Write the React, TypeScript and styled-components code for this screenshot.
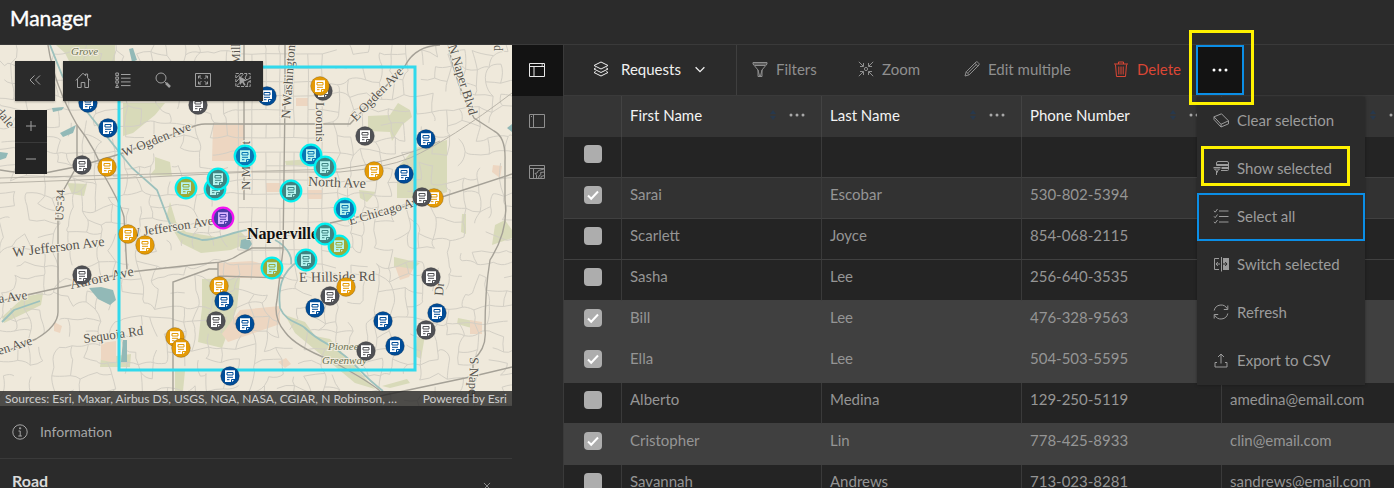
import React from "react";
import styled, { createGlobalStyle, css } from "styled-components";

const GlobalStyle = createGlobalStyle`
  *, *::before, *::after { box-sizing: border-box; }
  html, body, #root { height: 100%; }
  body {
    margin: 0;
    overflow: hidden;
    background: #2b2b2b;
    color: #9c9c9c;
    font: 15px/20px Lato, "Open Sans", sans-serif;
  }
  button {
    margin: 0;
    padding: 0;
    border: 0;
    background: none;
    color: inherit;
    font: inherit;
    cursor: pointer;
  }
`;

/* ---------- page frame ---------- */

const Page = styled.div`
  display: flex;
  flex-direction: column;
  height: 100%;
`;

const Header = styled.header`
  flex: none;
  padding: 4px 10px 13px;
  border-bottom: 1px solid #3a3a3a;
`;

const Title = styled.h1`
  margin: 0;
  color: #ffffff;
  font-size: 21px;
  line-height: 27px;
  font-weight: 400;
  -webkit-text-stroke: 0.4px #ffffff;
`;

const Body = styled.main`
  flex: 1;
  display: flex;
  min-height: 0;
`;

const SidePanel = styled.section`
  flex: none;
  width: 512px;
  display: flex;
  flex-direction: column;
`;

/* ---------- map ---------- */

const MapArea = styled.div`
  position: relative;
  flex: none;
  height: 361px;
  overflow: hidden;
  background: #efe9db;
`;

const MapDrawing = styled.svg`
  display: block;
  width: 100%;
  height: 100%;
`;

const MapControls = styled.div`
  position: absolute;
  top: 16px;
  left: 15px;
  display: flex;
  gap: 8px;
  align-items: flex-start;
`;

const MapBar = styled.div`
  display: flex;
  background: #2b2b2b;
  box-shadow: 0 1px 2px rgba(0, 0, 0, 0.3);
`;

const MapButton = styled.button`
  display: grid;
  place-items: center;
  width: 40px;
  height: 40px;
  padding-bottom: 2px;
  color: #a0a0a0;
`;

const ZoomControls = styled.div`
  position: absolute;
  top: 65px;
  left: 15px;
  display: flex;
  flex-direction: column;
  background: #242424;
`;

const ZoomButton = styled.button`
  display: grid;
  place-items: center;
  width: 32px;
  height: 32px;
  color: #a0a0a0;

  & + & {
    border-top: 1px solid #3a3a3a;
  }
`;

const Attribution = styled.div`
  position: absolute;
  left: 0;
  right: 0;
  bottom: 0;
  display: flex;
  justify-content: space-between;
  padding: 0 5px;
  background: rgba(36, 36, 36, 0.8);
  color: #cfcfcf;
  font-size: 12px;
  line-height: 15px;
`;

/* ---------- panel under the map ---------- */

const InfoRow = styled.div`
  display: flex;
  flex: none;
  align-items: center;
  gap: 12px;
  height: 53px;
  padding: 0 12px;
  border-bottom: 1px solid #3a3a3a;
  font-size: 14px;
  color: #a6a6a6;
`;

const SectionHead = styled.div`
  display: flex;
  flex: none;
  align-items: flex-start;
  justify-content: space-between;
  padding: 12px 18px 12px 12px;
`;

const SectionTitle = styled.h2`
  margin: 0;
  color: #dadada;
  font-size: 16px;
  line-height: 20px;
  font-weight: 700;
`;

const CloseButton = styled.button`
  padding-top: 8px;
  line-height: 0;
`;

/* ---------- rail ---------- */

const Rail = styled.nav`
  flex: none;
  width: 52px;
  border-right: 1px solid #3a3a3a;
`;

const RailButton = styled.button<{ $active?: boolean }>`
  display: grid;
  place-items: center;
  width: 100%;
  height: 51px;
  padding: 0 2px 2px 0;
  color: ${(p) => (p.$active ? "#e8e8e8" : "#8f8f8f")};
  background: ${(p) => (p.$active ? "#131313" : "transparent")};
`;

/* ---------- table panel ---------- */

const TablePanel = styled.section`
  flex: 1;
  min-width: 0;
`;

const Toolbar = styled.div`
  display: flex;
  height: 51px;
  border-bottom: 1px solid #3a3a3a;
`;

const LayerPicker = styled.button`
  display: flex;
  align-items: center;
  gap: 12px;
  flex: none;
  width: 173px;
  padding: 0 30px 2px 29px;
  border-right: 1px solid #3f3f3f;
  color: #f0f0f0;
  text-align: left;
`;

const LayerName = styled.span`
  flex: 1;
`;

const ToolButton = styled.button<{ $width: number; $danger?: boolean }>`
  display: flex;
  align-items: center;
  gap: 8px;
  flex: none;
  width: ${(p) => p.$width}px;
  padding: 0 0 2px 15px;
  white-space: nowrap;
  color: ${(p) => (p.$danger ? "#dc4635" : "#8f8f8f")};
`;

const MoreWrap = styled.div`
  position: relative;
  z-index: 2;
  flex: none;
  width: 48px;
`;

const MoreButton = styled.button`
  display: grid;
  place-items: center;
  width: 100%;
  height: 100%;
  border: 2px solid #0b8ee6;
  background: #131313;
  color: #ffffff;
`;

const highlight = css`
  position: absolute;
  border: 3px solid #fff200;
  pointer-events: none;
`;

const MoreHighlight = styled.span`
  ${highlight}
  inset: -15px -10px -10px -7px;
`;

const ItemHighlight = styled.span`
  ${highlight}
  inset: 1px 15px 7px 4px;
`;

const Menu = styled.ul`
  position: absolute;
  top: 52px;
  left: 1px;
  z-index: -1;
  width: 168px;
  margin: 0;
  padding: 0;
  list-style: none;
  background: #2b2b2b;
  box-shadow: 0 0 3px rgba(0, 0, 0, 0.35);
`;

const MenuItem = styled.li`
  position: relative;
`;

const MenuButton = styled.button<{ $focused?: boolean }>`
  display: flex;
  align-items: center;
  gap: 8px;
  width: 100%;
  height: 48px;
  padding: 0 14px 2px;
  border: 2px solid ${(p) => (p.$focused ? "#0b8ee6" : "transparent")};
  text-align: left;
  white-space: nowrap;
`;

const TableFrame = styled.div`
  overflow: hidden;
`;

const DataTable = styled.table`
  width: 858px;
  table-layout: fixed;
  border-collapse: separate;
  border-spacing: 0;
`;

const CheckColumn = styled.col`
  width: 58px;
`;

const HeadCell = styled.th`
  height: 41px;
  padding: 0 0 3px 8px;
  border-right: 1px solid #434343;
  background: #353535;
  color: #f3f3f3;
  font-weight: 400;
  text-align: left;
`;

const HeadContent = styled.div`
  display: flex;
  align-items: center;
  gap: 12px;
  padding-right: 16px;
`;

const HeadLabel = styled.span`
  flex: 1;
`;

const HeadMenu = styled.button`
  line-height: 0;
  color: #a8a8a8;
`;

type Tone = "plain" | "dim" | "selected";

const toneColor: Record<Tone, string> = {
  plain: "#242424",
  dim: "#323232",
  selected: "#404040",
};

const Row = styled.tr<{ $tone: Tone }>`
  background: ${(p) => toneColor[p.$tone]};

  td {
    border-right: 1px solid ${(p) => (p.$tone === "selected" ? "#404040" : "#3a3a3a")};
    border-bottom: 1px solid #404040;
  }
`;

const Cell = styled.td`
  height: 41px;
  padding: 0 0 8px 8px;
  color: #959595;
  white-space: nowrap;
`;

const CheckCell = styled.td`
  padding: 0 0 7px;
  text-align: center;
  line-height: 0;
`;

const Checkbox = styled.input`
  appearance: none;
  width: 18px;
  height: 18px;
  margin: 0;
  border-radius: 4px;
  background: #adadad;
  vertical-align: middle;

  &:checked {
    background: #adadad
      url("data:image/svg+xml,%3Csvg xmlns='http://www.w3.org/2000/svg' viewBox='0 0 18 18' fill='none' stroke='white' stroke-width='2'%3E%3Cpath d='M4 9.5l3.2 3.2L14 5.5'/%3E%3C/svg%3E");
  }
`;

/* ---------- icons ---------- */

const icons = {
  collapse: <path d="M7.5 3.5L3 8l4.500 4.500M13 3.500L8.500 8l4.500 4.500" />,
  home: <path d="M.8 8.500L8 1.200l2.600 2.600V2h2v3.900l2.600 2.600M2.500 7v8.500h3.700V10.500h3.600v5h3.700V7" />,
  legend: (
    <>
      <path d="M6 2.500h9.500M6 6.200h9.500M6 9.900h9.500M6 13.600h9.500" />
      <path d="M.8 1h2.600v2.600H.8zM.8 5h2.600v2.400H.8zM.8 8.800h2.600v2.400H.8zM2.100 12.500l1.500 3H.6z" />
    </>
  ),
  search: (
    <>
      <circle cx="6" cy="6" r="5" />
      <path d="M9.500 9.500l1.500 1.500" />
      <path d="M11 11l4 4" strokeWidth="2.500" />
    </>
  ),
  extent: (
    <>
      <path d="M.5 1.500h15v13H.5z" />
      <path d="M3.500 6.500v-2.500h2.500M3.500 4l3 3M12.500 6.500v-2.500H10M12.500 4l-3 3M3.500 9.500V12h2.500M3.500 12l3-3M12.500 9.500V12H10M12.500 12l-3-3" />
    </>
  ),
  select: (
    <>
      <path d="M.8 1.500h14.400v13H.8z" strokeDasharray="3 1.200" />
      <path d="M1 6l5-4.500M1 10l7.500-8M1.500 14l4-4M12 2l-2 4 2 2 3-2M12 14l1-4 2.500-1" />
      <path d="M4 4l8 4.500-3.300 1 2 3.500-1.500.8-2-3.400L5 13z" fill="currentColor" stroke="none" />
    </>
  ),
  info: (
    <>
      <circle cx="8" cy="8" r="7.200" />
      <path d="M6.500 7h1.700v5M6.300 12h3.600M7.500 3.800h1.200v1H7.500z" />
    </>
  ),
  close: <path d="M4.500 4.500l7 7M11.500 4.500l-7 7" />,
  railBoth: <path d="M.5 1.500h15v13H.5zM.5 4.500h15M5 4.500v10M3 3h.01M12.500 3H14" />,
  railSide: <path d="M.5 1.500h15v13H.5zM4.500 1.500v13M2.500 3v1" />,
  railMap: <path d="M.5 1.500h15v13H.5zM.5 4.500h15M4.500 4.500v10M7.500 14.500V11L6 9.500l2-.5 1.500-2.500L15 5M9.500 14.500l.5-2.500 2-1.500-.5-2L15.500 8M12 14.500v-2l3.500-1" />,
  layers: <path d="M8 1l7 3.500-7 3.500-7-3.500zM2.700 7L1 8l7 3.500L15 8l-1.700-1M2.700 10.500L1 11.500 8 15l7-3.500-1.700-1" />,
  chevron: <path d="M3 6L8 11 13 6" strokeWidth="1.500" />,
  filter: <path d="M1 1.500h14v1.500L10 9v6.500H6V9L1 3zM1 3h14M6 9l1.500 6M10 9l-1.500 6M3 4.500h10" />,
  zoomTo: (
    <>
      <circle cx="8" cy="8" r="1.600" />
      <path d="M.8.8l4.500 4.500M2 5.500h3.500V2M15.200.8l-4.500 4.500M14 5.500h-3.500V2M.8 15.200l4.500-4.500M2 10.500h3.500V14M15.200 15.200l-4.500-4.500M14 10.500h-3.500V14" />
    </>
  ),
  pencil: <path d="M1 15l1.200-4.200L12 1c1-1 4 1.700 3 3L5.200 13.800zM2.200 10.800l3 3M10.800 2.200l3 3M4 11.800l8.500-8.500" />,
  trash: <path d="M1 3h14M5.500 3V1h5v2M2.500 3.500l1 12h9l1-12M5.800 5.500v8M8 5.500v8M10.200 5.500v8" />,
  dots: (
    <g fill="currentColor" stroke="none">
      <circle cx="2" cy="8" r="1.500" />
      <circle cx="8" cy="8" r="1.500" />
      <circle cx="14" cy="8" r="1.500" />
    </g>
  ),
  eraser: <path d="M1 4.800L8.500 1.800l7 7L8 12.300zM1 4.800v2.700l7 7.500v-2.700M8 15l7.500-3.200V8.800" />,
  showSelected: (
    <>
      <path d="M3.500 5.500V3q0-1.500 1.500-1.500h9q1.500 0 1.500 1.500v6.500q0 1-1 1H8" />
      <path d="M3.500 5h12M8.500 8h7" strokeWidth="1.800" />
      <path d="M.5 7.500h7M1 8.500l2.500 2.500v4M7 8.500L4.500 11v1.500M1.500 9h5" />
    </>
  ),
  selectAll: <path d="M6 3h9.500M6 8.500h9.500M6 14h9.500M1 2.800l1.200 1.400L4.500 1M1 8.300l1.200 1.400L4.500 6.500M1 13.800l1.200 1.400L4.500 12" />,
  switch: (
    <>
      <path d="M6 2.500H1.500v11H6M8.500 1v14.500M3 8h4M4.800 6L3 8l1.800 2" />
      <path d="M10 2h6v12h-6z" fill="currentColor" stroke="none" />
      <path d="M10 8h4M12.200 6l1.800 2-1.800 2" stroke="#2b2b2b" />
    </>
  ),
  refresh: <path d="M1.200 6.500a7 7 0 0 1 13-1.800M14.800 1.500v4h-4M14.800 9.500a7 7 0 0 1-13 1.800M1.200 14.500v-4h4" />,
  export: <path d="M8 11.500V2M5 5l3-3 3 3M4 10.500H2v4.500h12v-4.500h-2" />,
  plus: <path d="M8 3v10M3 8h10" />,
  minus: <path d="M3 8h10" />,
};

type IconName = keyof typeof icons;

const IconSvg = styled.svg`
  display: block;
  flex: none;
  fill: none;
  stroke: currentColor;
  stroke-width: 1;
`;

function Icon({ name, size = 16 }: { name: IconName; size?: number }) {
  return (
    <IconSvg width={size} height={size} viewBox="0 0 16 16" aria-hidden="true">
      {icons[name]}
    </IconSvg>
  );
}

const SortIcon = () => (
  <svg width="8" height="12" viewBox="0 0 8 12" aria-hidden="true">
    <path d="M1 5l3-4 3 4zM1 7l3 4 3-4z" fill="#27384c" />
  </svg>
);

/* ---------- map drawing ---------- */

/* Repeatable pseudo-random numbers, so the street pattern never changes. */
function makeRandom(seed: number) {
  let s = seed;
  return () => {
    s = (s * 16807) % 2147483647;
    return s / 2147483647;
  };
}

/* Winding residential streets: a lattice with shifted corners and missing edges. */
function windingStreets() {
  const rnd = makeRandom(71);
  const step = 14;
  const cols = 39;
  const rows = 28;
  const pts = Array.from({ length: rows }, (_, r) =>
    Array.from({ length: cols }, (_, c) => {
      const x = c * step;
      const y = 40 + r * step;
      const town = x > 225 && x < 335 && y > 45 && y < 270;
      const j = town ? 1 : 9;
      return { x: x + (rnd() - 0.5) * j, y: y + (rnd() - 0.5) * j, town };
    })
  );
  let d = "";
  const edge = (a: { x: number; y: number; town: boolean }, b: { x: number; y: number }) => {
    const bend = a.town ? 0 : 7;
    const keep = a.town ? 0.93 : 0.6;
    const cx = (a.x + b.x) / 2 + (rnd() - 0.5) * bend;
    const cy = (a.y + b.y) / 2 + (rnd() - 0.5) * bend;
    if (rnd() < keep) {
      d += `M${a.x.toFixed(1)} ${a.y.toFixed(1)}Q${cx.toFixed(1)} ${cy.toFixed(1)} ${b.x.toFixed(1)} ${b.y.toFixed(1)}`;
    }
  };
  for (let r = 0; r < rows; r++) {
    for (let c = 0; c < cols; c++) {
      if (c + 1 < cols) edge(pts[r][c], pts[r][c + 1]);
      if (r + 1 < rows) edge(pts[r][c], pts[r + 1][c]);
    }
  }
  return d;
}

const streets = windingStreets();

const parks = [
  "M56 45h59v28l-20 30-10-10-20-40z",
  "M123 103h42l-10 12-22 18-10 3z",
  "M155 157l15 5 2 14-22-1 5-6z",
  "M67 183l20 1-3 12-12-2z",
  "M368 116l22-1 8-12 12 7 2 7-10 8-10 16-2-9-22-1z",
  "M415 148l32-8v52l-17 6h-33v-30z",
  "M202 279l38-1-3 30-15 40-24-6 4-34z",
  "M170 202l6 20 10 10 30 5 25-5 10 10-20 8-30 3-20-10-15-25z",
  "M24 297l19-4-2 12-12 6-25 12-2-6z",
  "M101 358l30-4-1 13h-30z",
  "M175 371h10l-2 20h-8z",
  "M394 257l26 6-8 7-18-3z",
  "M495 225l10-5 7 10v8l-20 7z",
  "M462 214h4v20l-5-2z",
  "M417 337l8-2-4 24-6-3z",
  "M285 315l20 7 10 14 15 3 45 50-20-6-60-50z",
  "M285 161l24-2 2 7-25-1zM359 190l17 2-9 10-7-4z",
  "M458 318l20 4 1 8-22-6zM382 386l25-7 3 4-20 5z",
];

const squares = [
  "M213 125h31v36h-32z",
  "M296 98h12v8h-12zM266 183h14v9h-14zM308 190h14v9h-14z",
  "M218 263l34-2 30 9v8h-62z",
  "M240 310l40-4v18l-52 18-6-8z",
  "M101 343l15-2v22l-15-3z",
  "M395 266l18 3-4 8-9 3z",
  "M470 320l12 2v12h-12z",
  "M493 165l9 1-2 12-8-6z",
  "M54 322l8 4-2 7-6-2zM278 362l8-4 5 6-6 4z",
];

const ponds = [
  "M89 288l12-1 12 3 3 10-6 5-12-6z",
  "M241 240l8-2 3 6-4 6-8-2z",
  "M123 340h4v22h-6z",
  "M0 152l8 1-2 5-6 2zM52 108l12-1-2 3-9 2zM60 133l16-8-3 8-10 4z",
  "M129 49l4-1 4 12-5 2zM507 128l5-4v8z",
];

const creeks = [
  "M50 45l12 30 10 18 40 50 20 25 25 22 13 34c8 12 20 12 32 16 15 0 30-8 45-10",
  "M300 260c-20 12-22 30-20 48 6 14 18 14 25 20 15 15 28 17 36 25 15 10 20 22 42 38",
  "M275 240c8 4 18 14 16 24",
  "M2 322l12-12 26-9",
];

const mainRoads = [
  "M48 45q6 40 29 80v41L58 200v112q0 14-22 27L0 354",
  "M77 125q20 25 28 52 16 28 19 40l3 54",
  "M0 170q25 4 45 3l35-7 40-12 70-26q8-4 15-4h145L405 66q10-20 35-21",
  "M285 45v55l-2 150-6 50q-4 18 8 32 10 14 45 28 40 22 50 31",
  "M448 45q8 40 26 73l20 13q12 6 11 30v39q4 30-15 60-5 30-5 70 2 18-12 30v31",
  "M512 174l-67 22-50 13-65 14",
  "M244 45v155",
  "M0 301l40-9 90-20 80-9q18 0 30-9l12-6h31",
  "M173 391V282l36-13h9M218 263v13l65 2",
  "M380 396l90-19 42-10",
];

const railLines = ["M0 183l130-5 120-6h90q45-4 70-14 40-18 102-65", "M0 178l120-3 220-6q50-6 100-28"];

const markerFill = {
  blue: "#004c97",
  gray: "#505155",
  orange: "#e49a05",
  skyPick: "#0877b4",
  tealPick: "#3f8482",
  greenPick: "#9aab3a",
  current: "#4a3ca8",
};

type MarkerKind = keyof typeof markerFill;

const markers: [number, number, MarkerKind][] = [
  [88, 103, "blue"],
  [108, 128, "blue"],
  [267, 96, "blue"],
  [198, 105, "gray"],
  [323, 91, "gray"],
  [320, 86, "orange"],
  [82, 165, "gray"],
  [107, 167, "orange"],
  [365, 136, "gray"],
  [426, 139, "blue"],
  [374, 171, "orange"],
  [404, 174, "blue"],
  [434, 198, "orange"],
  [422, 197, "gray"],
  [128, 234, "orange"],
  [145, 245, "orange"],
  [82, 275, "gray"],
  [219, 286, "orange"],
  [224, 301, "blue"],
  [216, 321, "gray"],
  [245, 324, "blue"],
  [330, 296, "gray"],
  [346, 287, "orange"],
  [315, 308, "blue"],
  [383, 321, "blue"],
  [431, 277, "gray"],
  [437, 313, "blue"],
  [426, 330, "gray"],
  [366, 351, "gray"],
  [395, 346, "blue"],
  [175, 337, "orange"],
  [181, 348, "orange"],
  [230, 376, "blue"],
  [245, 156, "skyPick"],
  [311, 155, "skyPick"],
  [325, 167, "tealPick"],
  [291, 191, "tealPick"],
  [345, 209, "skyPick"],
  [186, 188, "greenPick"],
  [215, 189, "tealPick"],
  [218, 179, "tealPick"],
  [339, 246, "greenPick"],
  [325, 234, "tealPick"],
  [306, 260, "tealPick"],
  [272, 268, "greenPick"],
  [223, 218, "current"],
];

function Marker({ x, y, kind }: { x: number; y: number; kind: MarkerKind }) {
  const picked = kind.endsWith("Pick");
  const current = kind === "current";
  const fill = markerFill[kind];
  const paper = picked ? "#b5f3ee" : current ? "#d9b5ff" : "#ffffff";
  const ring = picked ? "#00f0f0" : current ? "#f312f3" : "rgba(30,30,30,.35)";
  return (
    <g transform={`translate(${x} ${y})`}>
      <circle r={picked || current ? 10.3 : 9.4} fill={fill} stroke={ring} strokeWidth={picked || current ? 2.2 : 0.6} />
      <path d="M-5-5.800h10V3L2 6H-5z" fill={paper} />
      <path d="M-3-3.500h6v2.500h-6zM-3 1.300h6M-3 3.700h2.500M1.500 6V3.500h3.500" fill="none" stroke={fill} strokeWidth="1" />
    </g>
  );
}

const MapLabel = styled.text<{ $size?: number; $park?: boolean; $city?: boolean }>`
  font-family: "Liberation Serif", serif;
  font-size: ${(p) => p.$size ?? 12}px;
  font-style: ${(p) => (p.$park ? "italic" : "normal")};
  font-weight: ${(p) => (p.$city ? 700 : 400)};
  fill: ${(p) => (p.$city ? "#111111" : p.$park ? "#6c7350" : "#57544e")};
  stroke: #f1ecdf;
  stroke-width: 2px;
  paint-order: stroke;
`;

const labels: { text: string; x: number; y: number; turn?: number; size?: number; park?: boolean; city?: boolean }[] = [
  { text: "Grove", x: 71, y: 55, size: 11, park: true },
  { text: "dale", x: -5, y: 112, turn: 50, size: 13 },
  { text: "Mill", x: 240, y: 64, turn: -90 },
  { text: "W Ogden Ave", x: 124, y: 157, turn: -22, size: 13 },
  { text: "N Washington", x: 290, y: 119, turn: -86, size: 13 },
  { text: "Loomis", x: 316, y: 102, turn: 90, size: 13 },
  { text: "E Ogden Ave", x: 356, y: 122, turn: -46, size: 13 },
  { text: "N Naper Blvd", x: 448, y: 46, turn: 73, size: 13 },
  { text: "p", x: 500, y: 51, turn: -90 },
  { text: "N Mill St", x: 250, y: 190, turn: -90, size: 13 },
  { text: "North Ave", x: 308, y: 186, turn: 2, size: 14 },
  { text: "E Chicago Ave", x: 350, y: 225, turn: -16, size: 13 },
  { text: "US-34", x: 63, y: 221, turn: -87, size: 12 },
  { text: "W Jefferson Ave", x: 13, y: 257, turn: -7, size: 14 },
  { text: "W Jefferson Ave", x: 129, y: 238, turn: -9, size: 13 },
  { text: "Aurora Ave", x: 71, y: 289, turn: -12, size: 14 },
  { text: "a Ave", x: -1, y: 303, turn: -8, size: 13 },
  { text: "Ogden Ave", x: -22, y: 362, turn: -18, size: 13 },
  { text: "Sequoia Rd", x: 84, y: 343, turn: -8, size: 13 },
  { text: "Naperville", x: 247, y: 239, size: 16, city: true },
  { text: "E Hillside Rd", x: 299, y: 282, turn: -1, size: 14 },
  { text: "Pioneer", x: 328, y: 350, size: 11, park: true },
  { text: "Greenway", x: 322, y: 364, size: 11, park: true },
  { text: "Dr", x: 443, y: 296, turn: -86, size: 13 },
  { text: "S Naper", x: 470, y: 357, turn: 92, size: 13 },
];

function CityMap() {
  return (
    <MapDrawing viewBox="0 45 512 361" preserveAspectRatio="xMidYMid slice" role="img" aria-label="Requests map">
      <rect y="45" width="512" height="361" fill="#efe9db" />
      <g fill="#d8dab9">
        {parks.map((d) => (
          <path key={d} d={d} />
        ))}
      </g>
      <g fill="#edd6c1">
        {squares.map((d) => (
          <path key={d} d={d} />
        ))}
      </g>
      <path d={streets} fill="none" stroke="#d3cfc5" strokeWidth="1" />
      <g fill="#92b9b7">
        {ponds.map((d) => (
          <path key={d} d={d} />
        ))}
      </g>
      <g fill="none" stroke="#9cc1bd" strokeWidth="1.800">
        {creeks.map((d) => (
          <path key={d} d={d} />
        ))}
      </g>
      <g fill="none" stroke="#b9b4a9" strokeWidth="1">
        {railLines.map((d) => (
          <path key={d} d={d} />
        ))}
      </g>
      <g fill="none" stroke="#a5a197" strokeWidth="1.400">
        {mainRoads.map((d) => (
          <path key={d} d={d} />
        ))}
      </g>
      {labels.map((l) => (
        <MapLabel
          key={`${l.text}-${l.x}`}
          transform={`translate(${l.x} ${l.y}) rotate(${l.turn ?? 0})`}
          $size={l.size}
          $park={l.park}
          $city={l.city}
        >
          {l.text}
        </MapLabel>
      ))}
      <rect x="119" y="67" width="296" height="303" fill="none" stroke="#31d9ec" strokeWidth="3" />
      {markers.map(([x, y, kind]) => (
        <Marker key={`${x}-${y}`} x={x} y={y} kind={kind} />
      ))}
    </MapDrawing>
  );
}

/* ---------- data ---------- */

const mapTools: [IconName, string][] = [
  ["home", "Default view"],
  ["legend", "Legend"],
  ["search", "Search"],
  ["extent", "Full screen"],
  ["select", "Select"],
];

const menuItems: { icon: IconName; label: string; focused?: boolean; marked?: boolean }[] = [
  { icon: "eraser", label: "Clear selection" },
  { icon: "showSelected", label: "Show selected", marked: true },
  { icon: "selectAll", label: "Select all", focused: true },
  { icon: "switch", label: "Switch selected" },
  { icon: "refresh", label: "Refresh" },
  { icon: "export", label: "Export to CSV" },
];

const columns = ["First Name", "Last Name", "Phone Number", ""];

const people: { cells: [string, string, string, string]; tone: Tone; checked?: boolean }[] = [
  { cells: ["", "", "", ""], tone: "plain" },
  { cells: ["Sarai", "Escobar", "530-802-5394", ""], tone: "dim", checked: true },
  { cells: ["Scarlett", "Joyce", "854-068-2115", ""], tone: "plain" },
  { cells: ["Sasha", "Lee", "256-640-3535", ""], tone: "plain" },
  { cells: ["Bill", "Lee", "476-328-9563", ""], tone: "selected", checked: true },
  { cells: ["Ella", "Lee", "504-503-5595", ""], tone: "selected", checked: true },
  { cells: ["Alberto", "Medina", "129-250-5119", "amedina@email.com"], tone: "plain" },
  { cells: ["Cristopher", "Lin", "778-425-8933", "clin@email.com"], tone: "selected", checked: true },
  { cells: ["Savannah", "Andrews", "713-023-8281", "sandrews@email.com"], tone: "plain" },
];

/* ---------- app ---------- */

export default function App() {
  return (
    <Page>
      <GlobalStyle />
      <Header>
        <Title>Manager</Title>
      </Header>
      <Body>
        <SidePanel>
          <MapArea>
            <CityMap />
            <MapControls>
              <MapBar>
                <MapButton aria-label="Collapse">
                  <Icon name="collapse" />
                </MapButton>
              </MapBar>
              <MapBar>
                {mapTools.map(([icon, label]) => (
                  <MapButton key={icon} aria-label={label}>
                    <Icon name={icon} />
                  </MapButton>
                ))}
              </MapBar>
            </MapControls>
            <ZoomControls>
              <ZoomButton aria-label="Zoom in">
                <Icon name="plus" />
              </ZoomButton>
              <ZoomButton aria-label="Zoom out">
                <Icon name="minus" />
              </ZoomButton>
            </ZoomControls>
            <Attribution>
              <span>Sources: Esri, Maxar, Airbus DS, USGS, NGA, NASA, CGIAR, N Robinson, …</span>
              <span>Powered by Esri</span>
            </Attribution>
          </MapArea>
          <InfoRow>
            <Icon name="info" />
            Information
          </InfoRow>
          <SectionHead>
            <SectionTitle>Road</SectionTitle>
            <CloseButton aria-label="Close">
              <Icon name="close" size={14} />
            </CloseButton>
          </SectionHead>
        </SidePanel>
        <Rail>
          <RailButton $active aria-label="Map and table">
            <Icon name="railBoth" />
          </RailButton>
          <RailButton aria-label="Table only">
            <Icon name="railSide" />
          </RailButton>
          <RailButton aria-label="Map only">
            <Icon name="railMap" />
          </RailButton>
        </Rail>
        <TablePanel>
          <Toolbar>
            <LayerPicker>
              <Icon name="layers" />
              <LayerName>Requests</LayerName>
              <Icon name="chevron" size={14} />
            </LayerPicker>
            <ToolButton $width={106}>
              <Icon name="filter" />
              Filters
            </ToolButton>
            <ToolButton $width={106}>
              <Icon name="zoomTo" />
              Zoom
            </ToolButton>
            <ToolButton $width={149}>
              <Icon name="pencil" />
              Edit multiple
            </ToolButton>
            <ToolButton $width={98} $danger>
              <Icon name="trash" />
              Delete
            </ToolButton>
            <MoreWrap>
              <MoreButton aria-label="More" aria-expanded="true">
                <Icon name="dots" />
              </MoreButton>
              <MoreHighlight />
              <Menu>
                {menuItems.map((item) => (
                  <MenuItem key={item.label}>
                    <MenuButton $focused={item.focused}>
                      <Icon name={item.icon} />
                      {item.label}
                    </MenuButton>
                    {item.marked && <ItemHighlight />}
                  </MenuItem>
                ))}
              </Menu>
            </MoreWrap>
          </Toolbar>
          <TableFrame>
            <DataTable>
              <colgroup>
                <CheckColumn />
                {columns.map((c) => (
                  <col key={c} />
                ))}
              </colgroup>
              <thead>
                <tr>
                  <HeadCell />
                  {columns.map((c) => (
                    <HeadCell key={c}>
                      <HeadContent>
                        <HeadLabel>{c}</HeadLabel>
                        <SortIcon />
                        <HeadMenu aria-label="Column options">
                          <Icon name="dots" />
                        </HeadMenu>
                      </HeadContent>
                    </HeadCell>
                  ))}
                </tr>
              </thead>
              <tbody>
                {people.map((person, i) => (
                  <Row key={i} $tone={person.tone}>
                    <CheckCell>
                      <Checkbox type="checkbox" defaultChecked={person.checked} aria-label={person.cells[0] || "All rows"} />
                    </CheckCell>
                    {person.cells.map((value, c) => (
                      <Cell key={c}>{value}</Cell>
                    ))}
                  </Row>
                ))}
              </tbody>
            </DataTable>
          </TableFrame>
        </TablePanel>
      </Body>
    </Page>
  );
}
